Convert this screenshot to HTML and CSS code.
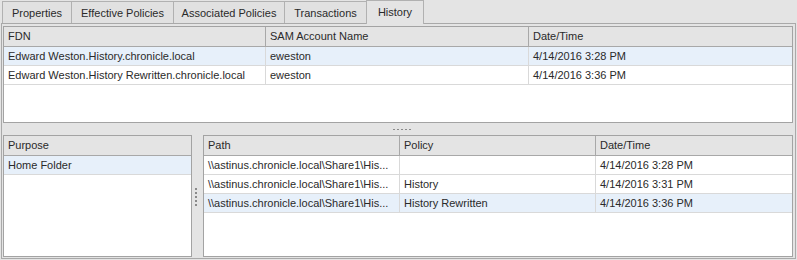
FILE: index.html
```html
<!DOCTYPE html>
<html>
<head>
<meta charset="utf-8">
<link rel="stylesheet" href="styles.css">
</head>
<body>
<div class="tabs">
  <div class="tab t1">Properties</div>
  <div class="tab t2">Effective Policies</div>
  <div class="tab t3">Associated Policies</div>
  <div class="tab t4">Transactions</div>
  <div class="tab active t5">History</div>
</div>
<div class="panel">
  <div class="grid top">
    <div class="row head">
      <div class="cell c-fdn">FDN</div>
      <div class="cell c-sam">SAM Account Name</div>
      <div class="cell c-date">Date/Time</div>
    </div>
    <div class="row sel">
      <div class="cell c-fdn">Edward Weston.History.chronicle.local</div>
      <div class="cell c-sam">eweston</div>
      <div class="cell c-date">4/14/2016 3:28 PM</div>
    </div>
    <div class="row">
      <div class="cell c-fdn">Edward Weston.History Rewritten.chronicle.local</div>
      <div class="cell c-sam">eweston</div>
      <div class="cell c-date">4/14/2016 3:36 PM</div>
    </div>
  </div>
  <div class="hsplit"><span class="dots-h"></span></div>
  <div class="bottom">
    <div class="grid left">
      <div class="row head">
        <div class="cell c-purpose">Purpose</div>
      </div>
      <div class="row sel">
        <div class="cell c-purpose">Home Folder</div>
      </div>
    </div>
    <div class="vsplit"><span class="dots-v"></span></div>
    <div class="grid right">
      <div class="row head">
        <div class="cell c-path">Path</div>
        <div class="cell c-policy">Policy</div>
        <div class="cell c-date2">Date/Time</div>
      </div>
      <div class="row">
        <div class="cell c-path">\\astinus.chronicle.local\Share1\His...</div>
        <div class="cell c-policy"></div>
        <div class="cell c-date2">4/14/2016 3:28 PM</div>
      </div>
      <div class="row">
        <div class="cell c-path">\\astinus.chronicle.local\Share1\His...</div>
        <div class="cell c-policy">History</div>
        <div class="cell c-date2">4/14/2016 3:31 PM</div>
      </div>
      <div class="row sel">
        <div class="cell c-path">\\astinus.chronicle.local\Share1\His...</div>
        <div class="cell c-policy">History Rewritten</div>
        <div class="cell c-date2">4/14/2016 3:36 PM</div>
      </div>
    </div>
  </div>
</div>
</body>
</html>
```
FILE: styles.css
```css
* { box-sizing: border-box; }
html, body { margin: 0; padding: 0; }
body {
  width: 797px;
  height: 260px;
  background: #e4e4e4;
  font-family: "Liberation Sans", Arial, sans-serif;
  font-size: 11px;
  color: #2a2a2a;
  overflow: hidden;
}
.tabs {
  display: flex;
  align-items: flex-end;
  height: 24px;
  padding-left: 2px;
  position: relative;
  z-index: 1;
}
.tab {
  height: 22px;
  border: 1px solid #b1b1b1;
  border-bottom: none;
  border-left: none;
  background: #e1e1e1;
  display: flex;
  align-items: center;
  justify-content: center;
  padding-top: 1px;
  margin-bottom: 1px;
}
.tab.t1 { border-left: 1px solid #b1b1b1; width: 70px; }
.tab.t2 { width: 102px; }
.tab.t3 { width: 111px; }
.tab.t4 { width: 82px; }
.tab.active {
  width: 58px;
  height: 24px;
  margin-bottom: 0;
  background: #e4e4e4;
  border-left: 1px solid #b1b1b1;
  margin-left: -1px;
  padding-top: 0;
  padding-bottom: 2px;
}
.panel {
  margin-top: -1px;
  margin-left: 1px;
  width: 795px;
  height: 236px;
  border: 1px solid #a9a9a9;
  background: #e4e4e4;
  padding: 2px 2px 1px 1px;
  display: flex;
  flex-direction: column;
}
.grid {
  background: #fff;
  border: 1px solid #a3a3a3;
}
.grid.top { height: 97px; }
.hsplit {
  height: 12px;
  display: flex;
  justify-content: center;
  align-items: center;
}
.dots-h {
  width: 18px;
  height: 1px;
  margin-left: 7px;
  background: repeating-linear-gradient(90deg, #8a8a8a 0 2px, transparent 2px 4px);
}
.bottom {
  display: flex;
  height: 122px;
}
.grid.left { width: 189px; }
.vsplit {
  width: 11px;
  display: flex;
  justify-content: center;
  align-items: center;
}
.dots-v {
  width: 2px;
  height: 18px;
  margin-top: 2px;
  margin-left: -3px;
  background: repeating-linear-gradient(180deg, #8a8a8a 0 2px, transparent 2px 4px);
}
.grid.right { width: 590px; }
.row {
  display: flex;
  height: 19px;
  border-bottom: 1px solid #d9d9d9;
  background: #fff;
}
.row.head {
  height: 20px;
  background: #e4e4e4;
  border-bottom: 1px solid #a8a8a8;
}
.row.sel { background: #e7f0fa; }
.cell {
  padding-left: 4px;
  line-height: 18px;
  white-space: nowrap;
  overflow: hidden;
  border-right: 1px solid #d9d9d9;
}
.row.head .cell {
  border-right-color: #a8a8a8;
  line-height: 19px;
}
.cell:last-child { border-right: none; }
.c-fdn { width: 262px; }
.c-sam { width: 263px; }
.c-date { flex: 1; }
.c-purpose { flex: 1; }
.c-path { width: 196px; }
.c-policy { width: 196px; }
.c-date2 { flex: 1; }
```
